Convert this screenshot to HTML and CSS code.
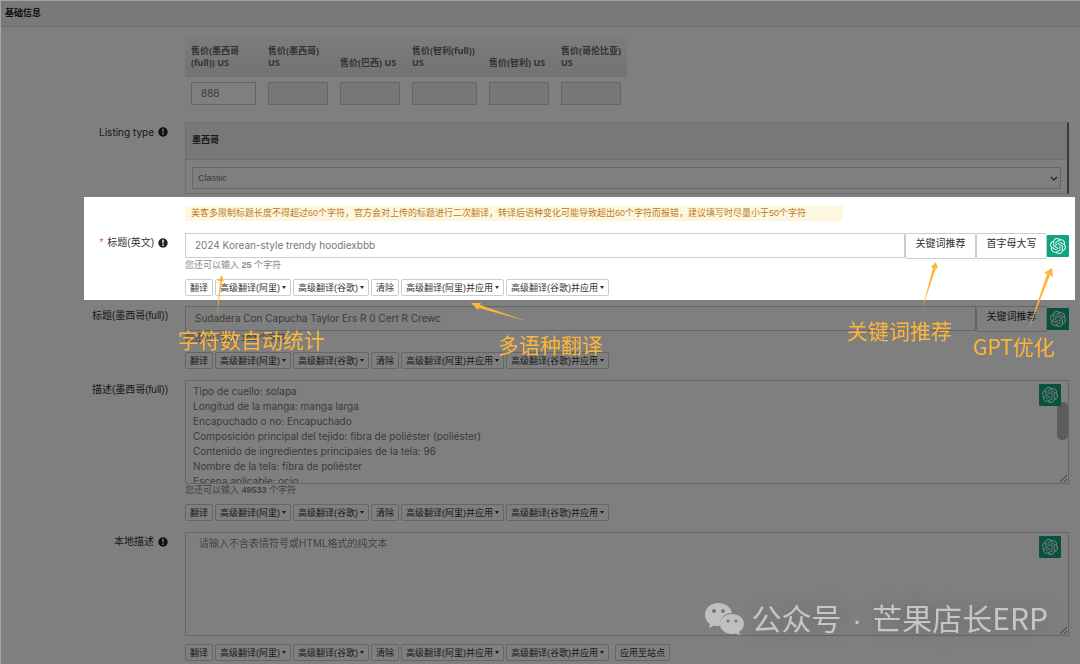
FILE: index.html
```
<!DOCTYPE html>
<html lang="zh-CN">
<head>
<meta charset="utf-8">
<title>基础信息</title>
<link rel="stylesheet" href="styles.css">
</head>
<body>
<svg class="defs" aria-hidden="true">
  <symbol id="gpt" viewBox="0 0 24 24"><path d="M22.2819 9.8211a5.9847 5.9847 0 0 0-.5157-4.9108 6.0462 6.0462 0 0 0-6.5098-2.9A6.0651 6.0651 0 0 0 4.9807 4.1818a5.9847 5.9847 0 0 0-3.9977 2.9 6.0462 6.0462 0 0 0 .7427 7.0966 5.98 5.98 0 0 0 .511 4.9107 6.051 6.051 0 0 0 6.5146 2.9001A5.9847 5.9847 0 0 0 13.2599 24a6.0557 6.0557 0 0 0 5.7718-4.2058 5.9894 5.9894 0 0 0 3.9977-2.9001 6.0557 6.0557 0 0 0-.7475-7.0729zm-9.022 12.6081a4.4755 4.4755 0 0 1-2.8764-1.0408l.1419-.0804 4.7783-2.7582a.7948.7948 0 0 0 .3927-.6813v-6.7369l2.02 1.1686a.071.071 0 0 1 .038.052v5.5826a4.504 4.504 0 0 1-4.4945 4.4944zm-9.6607-4.1254a4.4708 4.4708 0 0 1-.5346-3.0137l.142.0852 4.783 2.7582a.7712.7712 0 0 0 .7806 0l5.8428-3.3685v2.3324a.0804.0804 0 0 1-.0332.0615L9.74 19.9502a4.4992 4.4992 0 0 1-6.1408-1.6464zM2.3408 7.8956a4.485 4.485 0 0 1 2.3655-1.9728V11.6a.7664.7664 0 0 0 .3879.6765l5.8144 3.3543-2.0201 1.1685a.0757.0757 0 0 1-.071 0l-4.8303-2.7865A4.504 4.504 0 0 1 2.3408 7.872zm16.5963 3.8558L13.1038 8.364 15.1192 7.2a.0757.0757 0 0 1 .071 0l4.8303 2.7913a4.4944 4.4944 0 0 1-.6765 8.1042v-5.6772a.79.79 0 0 0-.407-.667zm2.0107-3.0231l-.142-.0852-4.7735-2.7818a.7759.7759 0 0 0-.7854 0L9.409 9.2297V6.8974a.0662.0662 0 0 1 .0284-.0615l4.8303-2.7866a4.4992 4.4992 0 0 1 6.6802 4.66zM8.3065 12.863l-2.02-1.1638a.0804.0804 0 0 1-.038-.0567V6.0742a4.4992 4.4992 0 0 1 7.3757-3.4537l-.142.0805L8.704 5.459a.7948.7948 0 0 0-.3927.6813zm1.0976-2.3654l2.602-1.4998 2.6069 1.4998v2.9994l-2.5974 1.4997-2.6067-1.4997Z"/></symbol>
  <symbol id="info" viewBox="0 0 10 10"><circle cx="5" cy="5" r="4.7" fill="#222"/><path d="M4.2 1.8h1.6l-.3 4h-1z M4.3 6.6h1.4v1.5H4.3z" fill="#fff"/></symbol>
</svg>
<main class="page">
  <h1 class="panel-title">基础信息</h1>

  <section class="row prices">
    <div class="field">
      <table class="price-table">
        <thead>
          <tr>
            <th class="wide" id="p1">售价(墨西哥(full)) US</th>
            <th id="p2">售价(墨西哥) US</th>
            <th id="p3">售价(巴西) US</th>
            <th class="wide" id="p4">售价(智利(full)) US</th>
            <th id="p5">售价(智利) US</th>
            <th id="p6">售价(哥伦比亚) US</th>
          </tr>
        </thead>
        <tbody>
          <tr>
            <td><input type="text" value="888" aria-labelledby="p1"></td>
            <td><input type="text" disabled aria-labelledby="p2"></td>
            <td><input type="text" disabled aria-labelledby="p3"></td>
            <td><input type="text" disabled aria-labelledby="p4"></td>
            <td><input type="text" disabled aria-labelledby="p5"></td>
            <td><input type="text" disabled aria-labelledby="p6"></td>
          </tr>
        </tbody>
      </table>
    </div>
  </section>

  <section class="row listing">
    <label class="label latin" for="listing">Listing type <svg class="info"><use href="#info"/></svg></label>
    <div class="field site-box">
      <h2 class="site-name">墨西哥</h2>
      <div class="site-body">
        <select id="listing"><option>Classic</option></select>
        <svg class="chevron" viewBox="0 0 8 6"><path d="M1 1l3 3 3-3" fill="none" stroke="#555" stroke-width="1.500"/></svg>
      </div>
    </div>
  </section>

  <section class="title-block">
    <div class="row">
      <p class="field notice">美客多限制标题长度不得超过60个字符，官方会对上传的标题进行二次翻译，转译后语种变化可能导致超出60个字符而报错，建议填写时尽量小于50个字符</p>
    </div>
    <div class="row">
      <label class="label" for="title-en"><span class="required">*</span> 标题(英文) <svg class="info"><use href="#info"/></svg></label>
      <div class="field">
        <div class="group">
          <input id="title-en" type="text" value="2024 Korean-style trendy hoodiexbbb">
          <button class="addon" type="button">关键词推荐</button>
          <button class="addon" type="button">首字母大写</button>
          <button class="gpt" type="button" aria-label="GPT优化"><svg><use href="#gpt"/></svg></button>
        </div>
        <p class="hint">您还可以输入 <b>25</b> 个字符</p>
        <div class="actions">
          <button type="button">翻译</button>
          <button type="button" class="drop">高级翻译(阿里)</button>
          <button type="button" class="drop">高级翻译(谷歌)</button>
          <button type="button">清除</button>
          <button type="button" class="drop">高级翻译(阿里)并应用</button>
          <button type="button" class="drop">高级翻译(谷歌)并应用</button>
        </div>
      </div>
    </div>
    <div class="spotlight"></div>
  </section>

  <section class="row">
    <label class="label" for="title-mx">标题(墨西哥(full))</label>
    <div class="field">
      <div class="group">
        <input id="title-mx" type="text" value="Sudadera Con Capucha Taylor Ers R 0 Cert R Crewc">
        <button class="addon" type="button">关键词推荐</button>
        <button class="gpt" type="button" aria-label="GPT优化"><svg><use href="#gpt"/></svg></button>
      </div>
      <p class="hint">您还可以输入 <b>102</b> 个字符</p>
      <div class="actions">
        <button type="button">翻译</button>
        <button type="button" class="drop">高级翻译(阿里)</button>
        <button type="button" class="drop">高级翻译(谷歌)</button>
        <button type="button">清除</button>
        <button type="button" class="drop">高级翻译(阿里)并应用</button>
        <button type="button" class="drop">高级翻译(谷歌)并应用</button>
      </div>
    </div>
  </section>

  <section class="row">
    <label class="label" for="desc-mx">描述(墨西哥(full))</label>
    <div class="field">
      <div class="area scrolling">
        <textarea id="desc-mx">Tipo de cuello: solapa
Longitud de la manga: manga larga
Encapuchado o no: Encapuchado
Composición principal del tejido: fibra de poliéster (poliéster)
Contenido de ingredientes principales de la tela: 96
Nombre de la tela: fibra de poliéster
Escena aplicable: ocio</textarea>
        <button class="gpt" type="button" aria-label="GPT优化"><svg><use href="#gpt"/></svg></button>
      </div>
      <p class="hint">您还可以输入 <b>49533</b> 个字符</p>
      <div class="actions">
        <button type="button">翻译</button>
        <button type="button" class="drop">高级翻译(阿里)</button>
        <button type="button" class="drop">高级翻译(谷歌)</button>
        <button type="button">清除</button>
        <button type="button" class="drop">高级翻译(阿里)并应用</button>
        <button type="button" class="drop">高级翻译(谷歌)并应用</button>
      </div>
    </div>
  </section>

  <section class="row">
    <label class="label" for="desc-local">本地描述 <svg class="info"><use href="#info"/></svg></label>
    <div class="field">
      <div class="area">
        <textarea id="desc-local" class="plain" placeholder="请输入不含表情符号或HTML格式的纯文本"></textarea>
        <button class="gpt" type="button" aria-label="GPT优化"><svg><use href="#gpt"/></svg></button>
      </div>
      <div class="actions">
        <button type="button">翻译</button>
        <button type="button" class="drop">高级翻译(阿里)</button>
        <button type="button" class="drop">高级翻译(谷歌)</button>
        <button type="button">清除</button>
        <button type="button" class="drop">高级翻译(阿里)并应用</button>
        <button type="button" class="drop">高级翻译(谷歌)并应用</button>
        <button type="button" class="apply">应用至站点</button>
      </div>
    </div>
  </section>

  <div class="note note-count">
    <svg width="12" height="40" viewBox="0 0 12 40"><path d="M2 40L5 6 3 6 7 0 9 7 7 6z"/></svg>
    <span>字符数自动统计</span>
  </div>
  <div class="note note-translate">
    <svg width="56" height="20" viewBox="0 0 56 20"><path d="M55 19L8 6 7 8 0 1 10 1 9 3z"/></svg>
    <span>多语种翻译</span>
  </div>
  <div class="note note-keyword">
    <svg width="18" height="48" viewBox="0 0 18 48"><path d="M1 47L12 6 10 5 15 0 17 7 15 6z"/></svg>
    <span>关键词推荐</span>
  </div>
  <div class="note note-gpt">
    <svg width="28" height="64" viewBox="0 0 28 64"><path d="M1 63L20 6 17 5 25 0 26 9 23 7z"/></svg>
    <span>GPT优化</span>
  </div>

  <div class="watermark">
    <svg width="40" height="34" viewBox="0 0 40 34">
      <path fill="#c0c0c0" d="M14 1C6.500 1 1 6 1 13c0 4 2 7 5 9l-1 4 5-2.500c1.500.5 4 .7 6 .6C15 17 20 11 28 11 27 5 21 1 14 1z"/>
      <path fill="#c0c0c0" d="M28 12c-7 0-12 4.500-12 10s5 10 12 10c1.500 0 3-.2 4-.5l4 2-1-3.500c3-2 5-5 5-8 0-5.500-5-10-12-10z"/>
      <g fill="#777"><circle cx="10" cy="9" r="2"/><circle cx="19" cy="9" r="2"/><circle cx="24" cy="19" r="1.600"/><circle cx="32" cy="19" r="1.600"/></g>
    </svg>
    <span>公众号<span class="dot"> · </span>芒果店长ERP</span>
  </div>
</main>
</body>
</html>
```
FILE: styles.css
```
* { box-sizing: border-box; }

body {
  margin: 0;
  background: #7f7f7f;
  color: #333;
  font: 10px/12px "Liberation Sans", "Noto Sans CJK SC", sans-serif;
}

h1, h2, p { margin: 0; }

button, input, select, textarea { font: inherit; color: inherit; }

.defs { display: none; }

.page {
  position: relative;
  min-height: 100vh;
  overflow: hidden;
  border: solid #a6a6a6;
  border-width: 1px 0 0 1px;
  background: #fff;
}

.panel-title {
  padding: 6px 4px 7px;
  border-bottom: 1px solid #ddd;
  background: #f3f3f3;
  color: #222;
  font-size: 9px;
  font-weight: bold;
}

.row {
  display: grid;
  grid-template-columns: 167px minmax(0, 1fr);
  column-gap: 17px;
  margin-bottom: 11px;
  padding-right: 11px;
}

.field { grid-column: 2; }

.label {
  display: flex;
  justify-content: flex-end;
  align-items: center;
  gap: 4px;
  height: 20px;
  white-space: nowrap;
}

.latin { font-family: Inter, sans-serif; }

.required { color: #e05a4a; }

.info { width: 10px; height: 10px; }

input, select, textarea {
  border: 1px solid #ccc;
  border-radius: 0;
  background: #fff;
  color: #777;
  font: 10px/15px Inter, "Noto Sans CJK SC", sans-serif;
}

/* Prices */
.prices { margin: 11px 0 17px; }

.price-table {
  width: 442px;
  border-collapse: collapse;
  table-layout: fixed;
}

.price-table thead { background: linear-gradient(#f8f8f8, #e6e6e6); }

.price-table th {
  width: 72px;
  padding: 7px 4px 8px 6px;
  color: #666;
  font: bold 9px/12px "Noto Sans", "Noto Sans CJK SC", sans-serif;
  text-align: left;
  vertical-align: bottom;
}

.price-table .wide { width: 77px; }

.price-table td { padding: 5px 6px 0; }

.price-table input {
  display: block;
  width: 100%;
  height: 23px;
  padding: 0 9px 2px;
}

.price-table input:disabled { background: #eee; }

/* Listing type */
.site-box {
  border: 1px solid #ddd;
  border-right: 2px solid #777;
}

.site-name {
  padding: 11px 6px 13px;
  border-bottom: 1px solid #ddd;
  background: #f1f1f1;
  font-size: 9px;
}

.site-body {
  position: relative;
  padding: 7px 6px 4px;
}

.site-body select {
  appearance: none;
  display: block;
  width: 100%;
  height: 22px;
  padding: 0 5px;
  font-family: "Liberation Sans", sans-serif;
  font-size: 9px;
}

.chevron {
  position: absolute;
  right: 9px;
  top: 16px;
  width: 8px;
  height: 6px;
}

.listing { margin-bottom: 12px; }

/* Title with spotlight */
.title-block { position: relative; }

.title-block .row { margin-bottom: 10px; }

.title-block .row:first-child { margin-bottom: 12px; }

.notice {
  justify-self: start;
  padding: 0 37px 0 6px;
  background: #fdf7e0;
  color: #c07a1c;
  font-size: 9px;
  line-height: 15px;
}

.spotlight {
  position: absolute;
  z-index: 2;
  inset: -9px 5px -4px 83px;
  box-shadow: 0 0 0 2000px rgba(0, 0, 0, 0.5);
  pointer-events: none;
}

.group {
  display: flex;
  align-items: flex-start;
}

.group input {
  flex: 1;
  min-width: 0;
  height: 25px;
  padding: 0 9px 1px;
}

.addon {
  width: 71px;
  height: 26px;
  padding: 0 0 4px;
  border: 1px solid #ccc;
  border-radius: 2px;
  background: #fff;
}

.gpt {
  display: grid;
  place-items: center;
  align-self: center;
  width: 22px;
  height: 22px;
  padding: 0;
  border: 0;
  border-radius: 1px;
  background: #10a37f;
}

.gpt svg { width: 16px; height: 16px; fill: #e4f5f0; }

.hint {
  color: #888;
  font-size: 9px;
}

.actions {
  display: flex;
  gap: 2px;
  margin-top: 8px;
}

.actions button {
  display: flex;
  align-items: center;
  height: 17px;
  padding: 0 4px;
  border: 1px solid #ccc;
  border-radius: 2px;
  background: #fff;
  font-size: 9px;
}

.drop::after {
  content: "";
  margin-left: 2px;
  border: solid transparent;
  border-width: 3px 2px 0;
  border-top-color: #333;
}

.actions .apply { margin-left: 4px; }

/* Descriptions */
.area { position: relative; }

.area textarea {
  display: block;
  width: 100%;
  height: 104px;
  padding: 3px 7px;
  resize: vertical;
}

.area .plain { padding: 3px 13px; }

.plain::placeholder { color: #888; }

.area .gpt {
  position: absolute;
  z-index: 1;
  top: 4px;
  right: 8px;
}

.scrolling::after {
  content: "";
  position: absolute;
  top: 22px;
  right: 1px;
  width: 11px;
  height: 38px;
  border-radius: 5px;
  background: #b8b8b8;
}

/* Annotations */
.note {
  position: absolute;
  z-index: 3;
  color: #ffb638;
  font: 21px/24px "Noto Sans CJK SC", sans-serif;
  white-space: nowrap;
  pointer-events: none;
}

.note svg { display: block; fill: #ffb638; }

.note-count { left: 177px; top: 274px; }
.note-count svg { margin: 0 0 12px 37px; }

.note-translate { left: 497px; top: 301px; }
.note-translate svg { margin: 0 0 10px -27px; }

.note-keyword { right: 128px; top: 261px; }
.note-keyword svg { margin: 0 0 8px 74px; }

.note-gpt { right: 25px; top: 267px; }
.note-gpt svg { margin: 0 0 2px 54px; }

/* Watermark */
.watermark {
  position: absolute;
  z-index: 3;
  right: 32px;
  bottom: 33px;
  display: flex;
  align-items: center;
  gap: 8px;
  color: #c6c6c6;
  font: 30px/38px "Noto Sans CJK SC", sans-serif;
  text-shadow: 0 0 24px rgba(0, 0, 0, 0.3);
  pointer-events: none;
}

.watermark svg { flex: none; }

.dot {
  padding: 0 2px;
  font-family: "Liberation Sans", sans-serif;
}
```
